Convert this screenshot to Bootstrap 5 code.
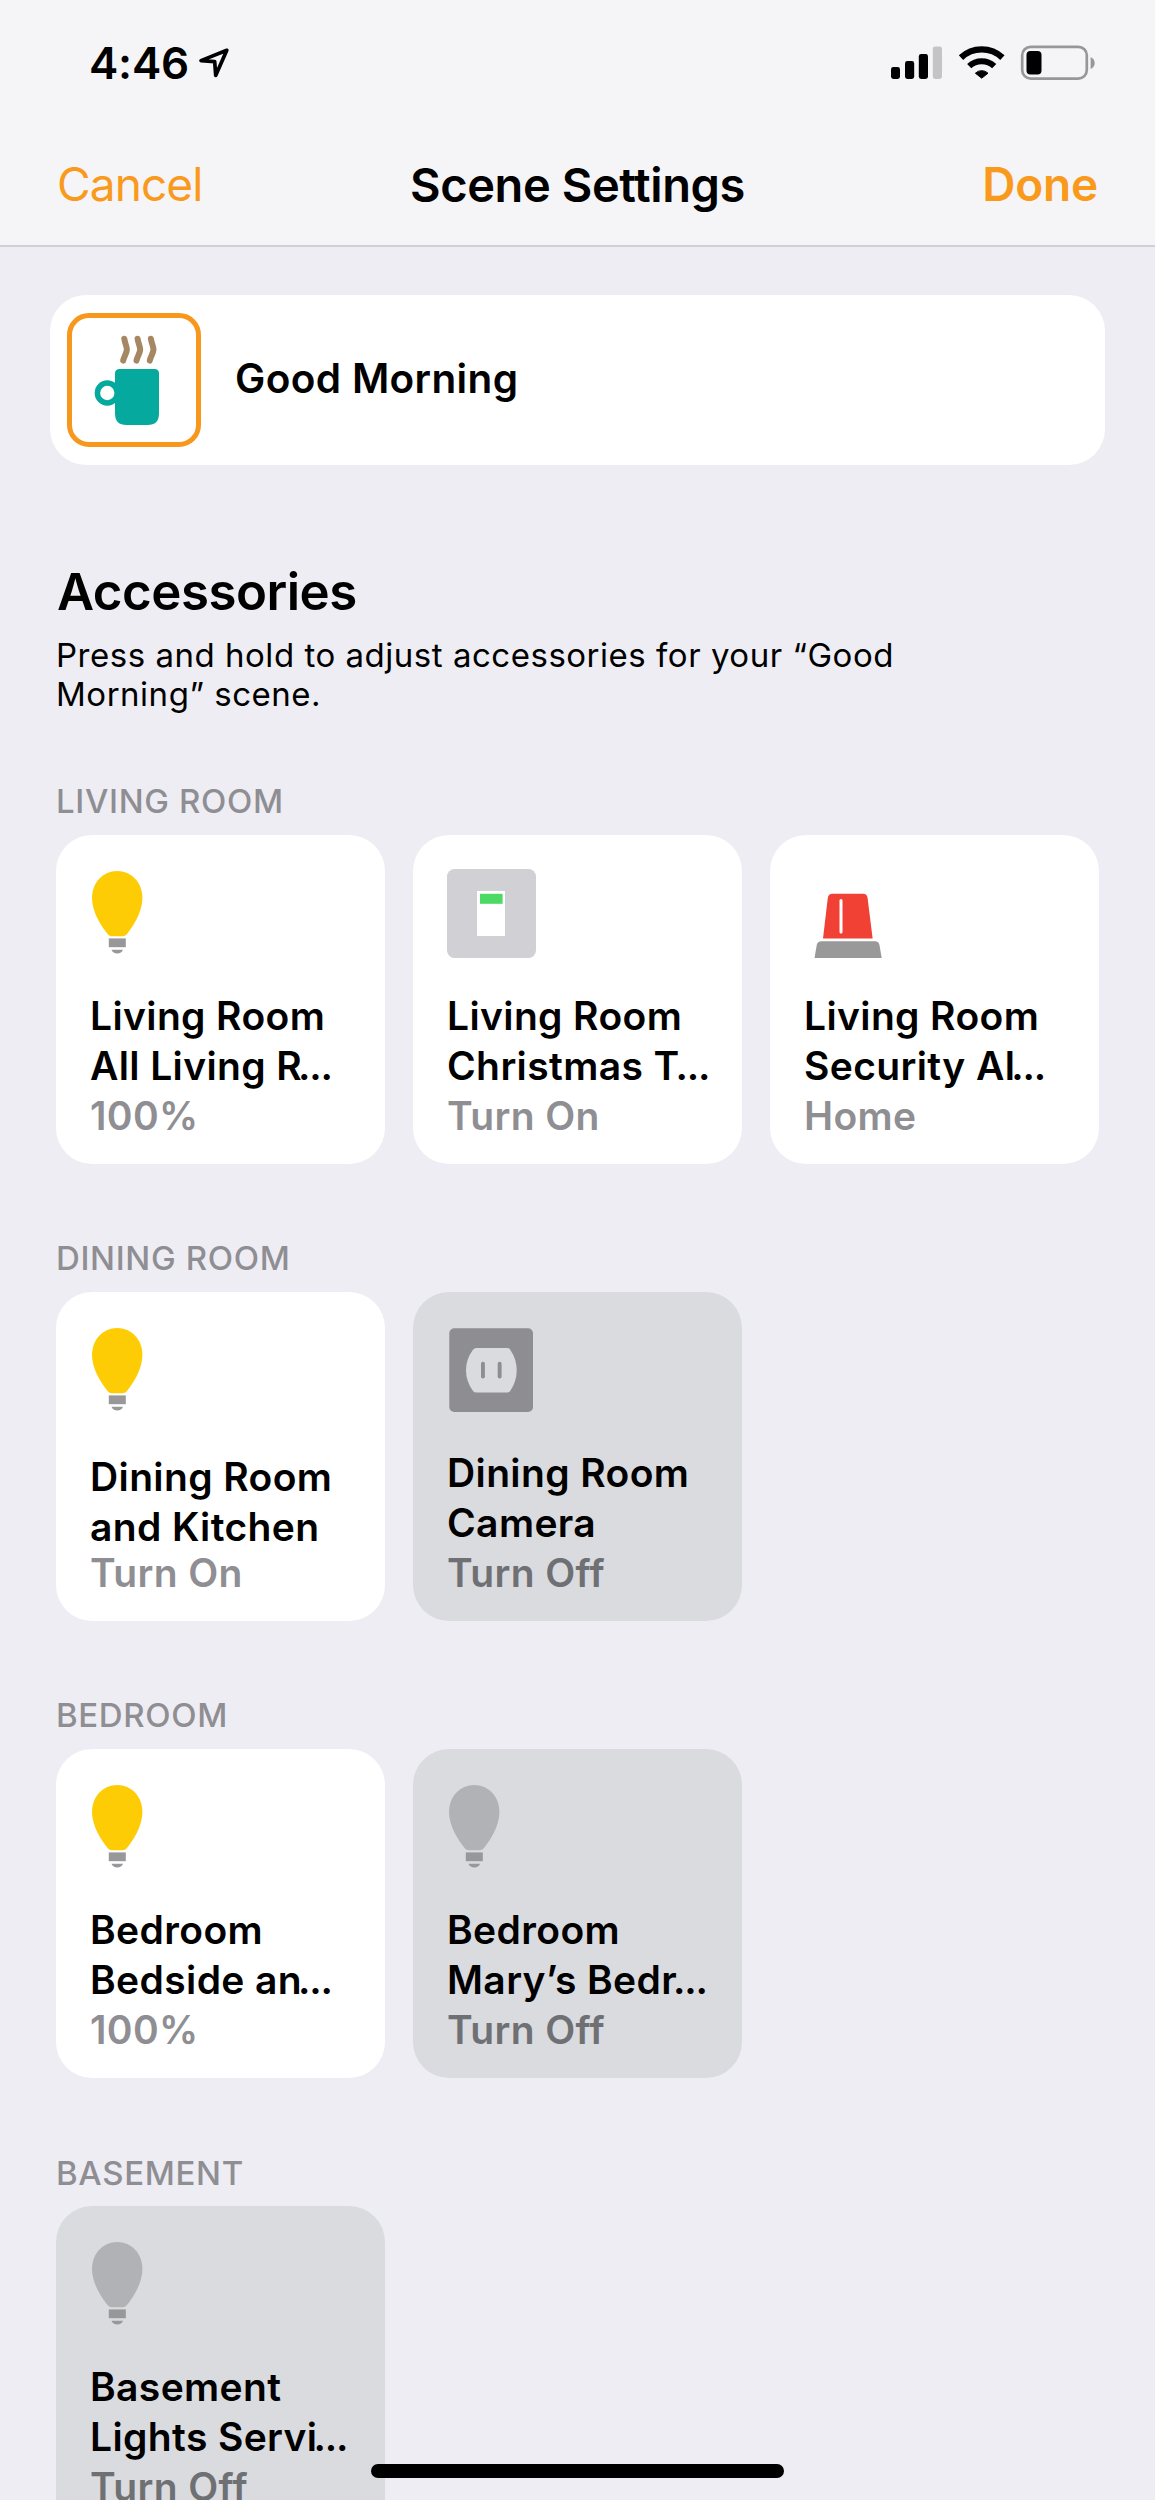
<!DOCTYPE html>
<html lang="en">
<head>
<meta charset="utf-8">
<meta name="viewport" content="width=device-width, initial-scale=1">
<title>Scene Settings</title>
<link href="https://cdn.jsdelivr.net/npm/bootstrap@5.3.0/dist/css/bootstrap.min.css" rel="stylesheet">
<style>
  body { font-family: Inter, "Liberation Sans", sans-serif; background: #eeedf3; color: #000; }
  .screen { width: 1155px; height: 2500px; }
  .topbar { height: 247px; background: #f5f5f8; border-bottom: 2px solid #d0d0d5; }
  .statusbar { height: 126px; padding: 0 59px 0 89px; }
  .clock { font-size: 44px; font-weight: 600; line-height: 54px; letter-spacing: -.2px; }
  .loc-arrow { width: 34px; height: 34px; margin-left: 8px; }
  .status-icons { width: 206px; height: 38px; }
  .navrow { height: 116px; padding: 0 57px; }
  .nav-act { font-size: 46px; line-height: 56px; letter-spacing: -.9px; color: #f99a1c; }
  .nav-act.semi { font-weight: 600; letter-spacing: -.2px; }
  .nav-title { font-size: 47px; font-weight: 600; line-height: 57px; letter-spacing: -.4px; }
  .scene-card { margin: 47.7px 50px 0; height: 170px; border-radius: 36px; background: #fff; padding-left: 17px; }
  .scene-icon { width: 134px; height: 134px; border: 5px solid #f7981d; border-radius: 22px; }
  .scene-icon svg { display: block; width: 124px; height: 124px; }
  .scene-name { font-size: 40.5px; font-weight: 600; line-height: 50px; letter-spacing: .35px; margin-left: 34px; padding-bottom: 2px; }
  .page-pad { padding: 0 56px; }
  .heading { font-size: 51px; font-weight: 600; line-height: 62px; letter-spacing: -.5px; margin: 96.3px 0 0; padding-left: 1px; }
  .hint { font-size: 33px; line-height: 39px; letter-spacing: .52px; margin: 13.3px 0 0; }
  .room-label { font-size: 33px; font-weight: 500; line-height: 40px; letter-spacing: .65px; color: #8e8e93; margin: 0 0 13.3px; }
  .room { margin-top: 74.8px; }
  .room-first { margin-top: 67px; }
  .tiles { gap: 28px; }
  .tile { width: 329px; height: 329px; border-radius: 36px; background: #fff; padding: 34px 0 22.4px 34px; }
  .tile-off { background: #dadbdf; }
  .tile-icon { width: 92px; height: 92px; display: block; }
  .tile-text { font-size: 39px; font-weight: 600; line-height: 50px; letter-spacing: .38px; white-space: nowrap; }
  .dots { letter-spacing: -1.2px; margin-left: -4px; }
  .tile-state { color: #8e8e93; }
  .tile-off .tile-state { color: #6f7074; }
  .tile-tight .tile-state { margin-top: -3.5px; }
  .home-bar { width: 413px; height: 14px; border-radius: 7px; background: #000; bottom: 22.5px; left: 371px; }
</style>
</head>
<body>
<svg class="d-none" xmlns="http://www.w3.org/2000/svg">
  <symbol id="bulb" viewBox="0 0 92 92">
    <path d="M27.2 2C41.5 2 52.4 13.500 52.400 29C52.400 43 43 58 36.500 65.500Q35 67.200 33 67.200H21.500Q19.500 67.200 18 65.500C11.500 58 2 43 2 29C2 13.500 13 2 27.200 2Z" fill="currentColor"/>
    <rect x="18.800" y="69.400" width="17" height="8.800" fill="#98989b"/>
    <path d="M21.500 80.800H33Q31.500 84.600 27.250 84.600Q23 84.600 21.500 80.800Z" fill="#98989b"/>
  </symbol>
</svg>
<div class="screen position-relative overflow-hidden">
  <header class="topbar">
    <div class="statusbar d-flex align-items-center justify-content-between">
      <div class="d-flex align-items-center">
        <span class="clock">4:46</span>
        <svg class="loc-arrow" viewBox="197 46 34 34"><path d="M226.800 50.300L201 60.600L214.700 61.700L215.700 75.400Z" fill="none" stroke="#000" stroke-width="3.700" stroke-linejoin="round"/></svg>
      </div>
      <svg class="status-icons" viewBox="890 44 206 38">
        <rect x="891" y="67" width="9" height="12" rx="2.400"/>
        <rect x="905" y="61" width="9.200" height="18" rx="2.400"/>
        <rect x="918.800" y="54" width="9.200" height="25" rx="2.400"/>
        <rect x="932.800" y="46.600" width="9.200" height="32.400" rx="2.400" fill="#c4c4c6"/>
        <g fill="none" stroke="#000">
          <path d="M961 57.600A30.200 30.200 0 0 1 1002.400 57.600" stroke-width="6.400"/>
          <path d="M969.200 66.200A18 18 0 0 1 994.200 66.200" stroke-width="6"/>
        </g>
        <path d="M981.700 78.200L975.400 73.200A9 9 0 0 1 988 73.200Z" stroke="#000" stroke-width="1" stroke-linejoin="round"/>
        <rect x="1022.200" y="46.800" width="64.600" height="31.800" rx="8.500" fill="none" stroke="#97979a" stroke-width="2.700"/>
        <rect x="1026.500" y="51" width="15" height="23.600" rx="4"/>
        <path d="M1090.600 57Q1094.700 59 1094.700 63T1090.600 69Z" fill="#97979a"/>
      </svg>
    </div>
    <nav class="navrow d-flex align-items-center">
      <div class="nav-act flex-fill w-25">Cancel</div>
      <div class="nav-title">Scene Settings</div>
      <div class="nav-act semi flex-fill w-25 text-end">Done</div>
    </nav>
  </header>

  <section class="scene-card d-flex align-items-center">
    <div class="scene-icon flex-shrink-0">
      <svg viewBox="72 318 124 124">
        <g fill="none" stroke="#a58763" stroke-width="6" stroke-linecap="round" stroke-linejoin="round">
          <path id="steam" d="M124.300 338.800C125 343.500 126.800 346.500 126.900 349.500C126.700 353.500 123.800 357 123.200 360.600"/>
          <use href="#steam" x="13.300"/>
          <use href="#steam" x="26.600"/>
        </g>
        <circle cx="107.300" cy="393" r="9.900" fill="none" stroke="#06a99e" stroke-width="5.500"/>
        <path d="M119.500 369H154.500Q159 369 159 373.500V413.500Q159 425 147.500 425H126.500Q115 425 115 413.500V373.500Q115 369 119.500 369Z" fill="#06a99e"/>
      </svg>
    </div>
    <div class="scene-name">Good Morning</div>
  </section>

  <main class="page-pad">
    <h1 class="heading">Accessories</h1>
    <p class="hint">Press and hold to adjust accessories for your “Good<br>Morning” scene.</p>

    <section class="room-first">
      <h2 class="room-label">LIVING ROOM</h2>
      <div class="tiles d-flex">
        <div class="tile d-flex flex-column justify-content-between">
          <svg class="tile-icon" color="#fecc05"><use href="#bulb"/></svg>
          <div class="tile-text"><div>Living Room</div><div>All Living R<span class="dots">...</span></div><div class="tile-state">100%</div></div>
        </div>
        <div class="tile d-flex flex-column justify-content-between">
          <svg class="tile-icon" viewBox="0 0 92 92">
            <rect width="89" height="89" rx="7.500" fill="#d1d0d5"/>
            <rect x="30" y="22" width="28" height="45" fill="#fff"/>
            <rect x="33" y="24.800" width="22.600" height="10" fill="#4cd964"/>
          </svg>
          <div class="tile-text"><div>Living Room</div><div>Christmas T<span class="dots">...</span></div><div class="tile-state">Turn On</div></div>
        </div>
        <div class="tile d-flex flex-column justify-content-between">
          <svg class="tile-icon" viewBox="0 0 92 92">
            <path d="M28.500 24.700H59Q63 24.700 63.600 29L68.600 69.500H19L23.800 29Q24.400 24.700 28.500 24.700Z" fill="#f04134"/>
            <path d="M37 31.500V63" stroke="#fff" stroke-width="3" stroke-linecap="round"/>
            <path d="M17.500 72.300H71Q74.700 72.300 75.400 75.800L77.700 89H10.500L12.800 75.800Q13.500 72.300 17.500 72.300Z" fill="#99999a"/>
          </svg>
          <div class="tile-text"><div>Living Room</div><div>Security Al<span class="dots">...</span></div><div class="tile-state">Home</div></div>
        </div>
      </div>
    </section>

    <section class="room">
      <h2 class="room-label">DINING ROOM</h2>
      <div class="tiles d-flex">
        <div class="tile tile-tight d-flex flex-column justify-content-between">
          <svg class="tile-icon" color="#fecc05"><use href="#bulb"/></svg>
          <div class="tile-text"><div>Dining Room</div><div>and Kitchen</div><div class="tile-state">Turn On</div></div>
        </div>
        <div class="tile tile-off d-flex flex-column justify-content-between">
          <svg class="tile-icon" viewBox="0 0 92 92">
            <rect x="2.300" y="2.300" width="83.700" height="83.700" rx="5" fill="#8e8d92"/>
            <path d="M29.500 22H60Q62 22 63.200 23.700Q69.700 33 69.700 44.300T63.200 65Q62 66.600 60 66.600H29.500Q27.300 66.600 26 65Q19 55.500 19 44.300T26 23.700Q27.300 22 29.500 22Z" fill="#dadbdf"/>
            <rect x="34" y="35.800" width="3.900" height="16.700" rx="1.900" fill="#8e8d92"/>
            <rect x="50.700" y="35.800" width="3.900" height="16.700" rx="1.900" fill="#8e8d92"/>
          </svg>
          <div class="tile-text"><div>Dining Room</div><div>Camera</div><div class="tile-state">Turn Off</div></div>
        </div>
      </div>
    </section>

    <section class="room">
      <h2 class="room-label">BEDROOM</h2>
      <div class="tiles d-flex">
        <div class="tile d-flex flex-column justify-content-between">
          <svg class="tile-icon" color="#fecc05"><use href="#bulb"/></svg>
          <div class="tile-text"><div>Bedroom</div><div>Bedside an<span class="dots">...</span></div><div class="tile-state">100%</div></div>
        </div>
        <div class="tile tile-off d-flex flex-column justify-content-between">
          <svg class="tile-icon" color="#b1b2b6"><use href="#bulb"/></svg>
          <div class="tile-text"><div>Bedroom</div><div>Mary’s Bedr<span class="dots">...</span></div><div class="tile-state">Turn Off</div></div>
        </div>
      </div>
    </section>

    <section class="room">
      <h2 class="room-label">BASEMENT</h2>
      <div class="tiles d-flex">
        <div class="tile tile-off d-flex flex-column justify-content-between">
          <svg class="tile-icon" color="#b1b2b6"><use href="#bulb"/></svg>
          <div class="tile-text"><div>Basement</div><div>Lights Servi<span class="dots">...</span></div><div class="tile-state">Turn Off</div></div>
        </div>
      </div>
    </section>
  </main>
  <div class="home-bar position-absolute"></div>
</div>
<script src="https://cdn.jsdelivr.net/npm/bootstrap@5.3.0/dist/js/bootstrap.bundle.min.js"></script>
</body>
</html>
